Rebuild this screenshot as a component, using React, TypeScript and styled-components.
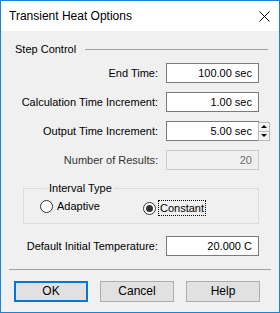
import styled, { createGlobalStyle } from "styled-components";

const GlobalStyle = createGlobalStyle`
  html, body {
    margin: 0;
    padding: 0;
    background: #ffffff;
  }
  body {
    font-family: "Liberation Sans", Arial, sans-serif;
    font-size: 11px;
    color: #000000;
  }
`;

const Window = styled.div`
  box-sizing: border-box;
  width: 280px;
  height: 313px;
  border: 1px solid #1883d7;
  display: flex;
  flex-direction: column;
  background: #f0f0f0;
`;

const TitleBar = styled.div`
  height: 30px;
  background: #ffffff;
  display: flex;
  align-items: center;
  justify-content: space-between;
  padding: 0 9px 0 8px;
`;

const Title = styled.span`
  font-size: 12px;
  line-height: 16px;
  margin-top: -1px;
`;

const Body = styled.div`
  flex: 1;
  display: flex;
  flex-direction: column;
  padding: 10px 8px 0 7px;
`;

const SectionHeader = styled.div`
  display: flex;
  align-items: center;
  gap: 9px;
  height: 16px;
  padding-left: 7px;
  margin-right: 3px;

  &::after {
    content: "";
    flex: 1;
    height: 1px;
    background: #a0a0a0;
  }
`;

const Rows = styled.div`
  display: flex;
  flex-direction: column;
  gap: 9px;
  margin-top: 6px;
`;

const Row = styled.div`
  display: grid;
  grid-template-columns: 150px 93px 11px;
  column-gap: 8px;
  align-items: center;
`;

const Label = styled.span<{ $disabled?: boolean }>`
  text-align: right;
  white-space: nowrap;
  color: ${({ $disabled }) => ($disabled ? "#333333" : "#000000")};
`;

const Field = styled.div<{ $disabled?: boolean }>`
  box-sizing: border-box;
  height: 20px;
  border: 1px solid ${({ $disabled }) => ($disabled ? "#cccccc" : "#7a7a7a")};
  background: ${({ $disabled }) => ($disabled ? "#f0f0f0" : "#ffffff")};
  color: ${({ $disabled }) => ($disabled ? "#6d6d6d" : "#000000")};
  text-align: right;
  padding: 0 6px 0 4px;
  line-height: 18px;
  white-space: nowrap;
`;

const Spinner = styled.div`
  display: flex;
  flex-direction: column;
  margin-left: -9px;
  width: 12px;
  height: 19px;
`;

const SpinButton = styled.div`
  flex: 1;
  box-sizing: border-box;
  border: 1px solid #b9b9b9;
  background: #f4f4f4;
  display: flex;
  align-items: center;
  justify-content: center;

  & + & {
    border-top: none;
  }
`;

const Arrow = styled.span<{ $up?: boolean }>`
  width: 0;
  height: 0;
  border-left: 3px solid transparent;
  border-right: 3px solid transparent;
  ${({ $up }) =>
    $up ? "border-bottom: 3px solid #000000;" : "border-top: 3px solid #000000;"}
`;

const GroupBox = styled.fieldset`
  margin: 10px 12px 0 15px;
  padding: 3px 0 8px 16px;
  border: 1px solid #dcdcdc;
  display: grid;
  grid-template-columns: 103px auto;
  align-items: start;
`;

const Legend = styled.legend`
  padding: 0 2px;
  margin-left: 7px;
  line-height: 16px;
`;

const RadioOption = styled.label<{ $shift?: number }>`
  display: flex;
  align-items: center;
  gap: 3px;
  margin-top: ${({ $shift }) => $shift ?? 0}px;
`;

const RadioCircle = styled.span<{ $checked?: boolean }>`
  box-sizing: border-box;
  width: 13px;
  height: 13px;
  border-radius: 50%;
  border: 1px solid #333333;
  background: #ffffff;
  display: flex;
  align-items: center;
  justify-content: center;

  &::after {
    content: "";
    width: 7px;
    height: 7px;
    border-radius: 50%;
    background: ${({ $checked }) => ($checked ? "#333333" : "transparent")};
  }
`;

const RadioText = styled.span<{ $focused?: boolean }>`
  line-height: 14px;
  padding: 0 1px;
  outline: ${({ $focused }) => ($focused ? "1px dotted #000000" : "none")};
  outline-offset: 0;
`;

const TempRow = styled(Row)`
  margin-top: 12px;
`;

const Divider = styled.div`
  height: 1px;
  background: #a0a0a0;
  margin: 13px 0 0 1px;
`;

const Buttons = styled.div`
  display: flex;
  gap: 12px;
  margin: 11px 0 0 6px;
`;

const Button = styled.button<{ $default?: boolean }>`
  box-sizing: border-box;
  width: 74px;
  height: 21px;
  font: inherit;
  font-size: 12px;
  color: #000000;
  background: #e1e1e1;
  border: ${({ $default }) => ($default ? "2px solid #0078d7" : "1px solid #adadad")};
  padding: 0;
  line-height: 17px;
`;

function CloseIcon() {
  return (
    <svg width="11" height="11" viewBox="0 0 11 11">
      <path d="M0.5 0.5 L10.5 10.5 M10.5 0.5 L0.5 10.5" stroke="#000000" strokeWidth="1" />
    </svg>
  );
}

export default function App() {
  return (
    <>
      <GlobalStyle />
      <Window>
        <TitleBar>
          <Title>Transient Heat Options</Title>
          <CloseIcon />
        </TitleBar>
        <Body>
          <SectionHeader>Step Control</SectionHeader>
          <Rows>
            <Row>
              <Label>End Time:</Label>
              <Field>100.00 sec</Field>
            </Row>
            <Row>
              <Label>Calculation Time Increment:</Label>
              <Field>1.00 sec</Field>
            </Row>
            <Row>
              <Label>Output Time Increment:</Label>
              <Field>5.00 sec</Field>
              <Spinner>
                <SpinButton>
                  <Arrow $up />
                </SpinButton>
                <SpinButton>
                  <Arrow />
                </SpinButton>
              </Spinner>
            </Row>
            <Row>
              <Label $disabled>Number of Results:</Label>
              <Field $disabled>20</Field>
            </Row>
          </Rows>
          <GroupBox>
            <Legend>Interval Type</Legend>
            <RadioOption>
              <RadioCircle />
              <RadioText>Adaptive</RadioText>
            </RadioOption>
            <RadioOption $shift={2}>
              <RadioCircle $checked />
              <RadioText $focused>Constant</RadioText>
            </RadioOption>
          </GroupBox>
          <TempRow>
            <Label>Default Initial Temperature:</Label>
            <Field>20.000 C</Field>
          </TempRow>
          <Divider />
          <Buttons>
            <Button $default>OK</Button>
            <Button>Cancel</Button>
            <Button>Help</Button>
          </Buttons>
        </Body>
      </Window>
    </>
  );
}
